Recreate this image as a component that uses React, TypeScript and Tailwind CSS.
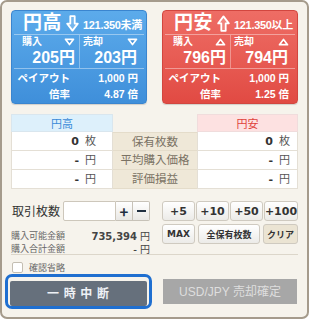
import type { ReactNode } from 'react';

const CARD_FONT = "font-['Liberation_Sans','Noto_Sans_CJK_JP',sans-serif]";

/* outlined arrow in the card title */
function BigArrow({ dir }: { dir: 'up' | 'down' }) {
  return (
    <svg width="13" height="17" viewBox="0 0 13 17" className={dir === 'up' ? 'rotate-180' : ''}>
      <path d="M4.3 1.2h4.4v7.4h3.1L6.5 15.6 1.2 8.6h3.1z" fill="rgba(255,255,255,0.18)" stroke="#fff" strokeWidth="1.8" strokeLinejoin="round" />
    </svg>
  );
}

function Tri({ dir, fill }: { dir: 'up' | 'down'; fill: string }) {
  return (
    <svg width="11" height="8" viewBox="0 0 11 8" className={dir === 'up' ? 'rotate-180' : ''}>
      <path d="M1.5 1.3h8L5.5 6.6z" fill={fill} stroke="#fff" strokeWidth="1.7" strokeLinejoin="round" />
    </svg>
  );
}

type CardProps = {
  title: string;
  dir: 'up' | 'down';
  limit: string;
  buy: string;
  sell: string;
  rate: string;
  tone: 'blue' | 'red';
};

function RateCard({ title, dir, limit, buy, sell, rate, tone }: CardProps) {
  const blue = tone === 'blue';
  return (
    <div
      className={`${CARD_FONT} w-[136px] h-[94px] rounded-[4px] border flex flex-col text-white font-bold shadow-[0_1px_1px_rgba(0,0,0,0.15)] ${
        blue
          ? 'border-[#3a85cf] bg-gradient-to-b from-[#5cabeb] to-[#3f8fda]'
          : 'border-[#d2463f] bg-gradient-to-b from-[#ee6d65] to-[#e14a43]'
      }`}
    >
      <div className="h-[23px] flex items-center pl-[11px] pr-[4px]">
        <span className="text-[19px] leading-none tracking-[0.5px]">{title}</span>
        <span className="ml-[4px] mt-[1px] flex"><BigArrow dir={dir} /></span>
        <span className="ml-auto mt-[5px] text-[11px] leading-none tracking-[-0.3px]">{limit}</span>
      </div>
      <div className="mx-[2px] h-px bg-white/40" />
      <div className="h-[33px] flex">
        <div className="w-[68px] border-r border-white/35 pl-[10px] pr-[4px] flex flex-col">
          <div className="h-[13px] pt-[1px] flex items-center justify-between">
            <span className="text-[10px] leading-none">購入</span>
            <Tri dir={dir} fill={blue ? '#3f8fda' : '#e14a43'} />
          </div>
          <div className="mt-[2px] text-right text-[16px] leading-[16px]">{buy}</div>
        </div>
        <div className="flex-1 pl-[3px] pr-[8px] flex flex-col">
          <div className="h-[13px] pt-[1px] flex items-center justify-between">
            <span className="text-[10px] leading-none">売却</span>
            <Tri dir={dir} fill={blue ? '#3f8fda' : '#e14a43'} />
          </div>
          <div className="mt-[2px] text-right text-[16px] leading-[16px] pr-[1px]">{sell}</div>
        </div>
      </div>
      <div className="mx-[2px] h-px bg-white/40" />
      <div className="pt-[1px] grid grid-cols-[58px_1fr] text-[10.5px] leading-none">
        <div className="h-[16px] flex items-center justify-end">ペイアウト</div>
        <div className="h-[16px] flex items-center justify-end pr-[8px]">1,000 円</div>
        <div className="h-[16px] flex items-center justify-end">倍率</div>
        <div className="h-[16px] flex items-center justify-end pr-[8px]">{rate} 倍</div>
      </div>
    </div>
  );
}

const ROWS = [
  { value: '0', unit: '枚', label: '保有枚数' },
  { value: '-', unit: '円', label: '平均購入価格' },
  { value: '-', unit: '円', label: '評価損益' },
];

function Val({ value, unit }: { value: string; unit: string }) {
  return (
    <span className="flex items-baseline gap-[6px]">
      <span className="font-bold text-[#333] font-['DejaVu_Sans',sans-serif] text-[11px]">{value}</span>
      <span className="text-[#555] text-[11px]">{unit}</span>
    </span>
  );
}

function QBtn({ children, w, beige }: { children: ReactNode; w: string; beige?: boolean }) {
  return (
    <button
      type="button"
      className={`${w} h-[20px] rounded-[3px] border border-[#cfcac0] font-bold text-[#333] flex items-center justify-center leading-none ${
        beige ? 'bg-[#ebe4d3]' : 'bg-gradient-to-b from-white to-[#ecebe8]'
      }`}
    >
      {children}
    </button>
  );
}

export default function App() {
  return (
    <div className="w-[309px] h-[319px] bg-white overflow-hidden">
      <div className="w-full h-full rounded-[7px] border-2 border-[#a59b8c] bg-[#f6f3ec] px-[9px] pt-[8px] flex flex-col font-['Noto_Sans_CJK_JP',sans-serif]">
        {/* rate cards */}
        <div className="flex gap-[15px]">
          <RateCard title="円高" dir="down" limit="121.350未満" buy="205円" sell="203円" rate="4.87" tone="blue" />
          <RateCard title="円安" dir="up" limit="121.350以上" buy="796円" sell="794円" rate="1.25" tone="red" />
        </div>

        {/* position table */}
        <div className="mt-[10px] grid grid-cols-[102px_84px_101px] text-[11px] leading-none">
          <div className="h-[18px] flex items-center justify-center bg-[#ddf0fb] border border-[#d9e6ee] text-[#3a8ad8]">円高</div>
          <div className="h-[18px]" />
          <div className="h-[18px] flex items-center justify-center bg-[#fde1e1] border border-[#f0dcdc] text-[#e0413a]">円安</div>
          {ROWS.map((r, i) => (
            <div key={r.label} className="contents">
              <div className="h-[19px] bg-white border-x border-b border-[#e4dfd5] flex items-center justify-end pr-[16px]">
                <Val value={r.value} unit={r.unit} />
              </div>
              <div className={`h-[19px] bg-[#efe8d8] border-b border-[#e4dcca] flex items-center justify-center text-[11.5px] text-[#7a7264] ${i === 0 ? 'border-t' : ''}`}>
                {r.label}
              </div>
              <div className="h-[19px] bg-white border-x border-b border-[#e4dfd5] flex items-center justify-end pr-[7px]">
                <Val value={r.value} unit={r.unit} />
              </div>
            </div>
          ))}
        </div>

        {/* quantity */}
        <div className="mt-[12px] h-[54px] flex gap-[12px] border-b border-[#dcd6ca]">
          <div className="w-[139px] flex flex-col">
            <div className="h-[20px] flex items-center">
              <span className="w-[52px] pl-[1px] text-[12px] text-[#333]">取引枚数</span>
              <div className="w-[53px] h-[20px] bg-white border border-[#cdc7bb] rounded-l-[2px]" />
              <button type="button" className="w-[17px] h-[20px] border border-l-0 border-[#c7c2b8] bg-gradient-to-b from-white to-[#e9e8e5] text-[15px] font-bold text-[#1f2f40] leading-none flex items-center justify-center">+</button>
              <button type="button" className="w-[17px] h-[20px] border border-l-0 border-[#c7c2b8] rounded-r-[2px] bg-gradient-to-b from-white to-[#e9e8e5] flex items-center justify-center">
                <span className="w-[9px] h-[2px] bg-[#1f2f40]" />
              </button>
            </div>
            <div className="mt-[8px] h-[13px] flex items-center justify-between text-[9px] text-[#666]">
              <span>購入可能金額</span>
              <span className="flex items-baseline gap-[3px]">
                <span className="font-bold text-[10px] text-[#444] font-['DejaVu_Sans',sans-serif]">735,394</span>
                <span className="text-[10px] text-[#444]">円</span>
              </span>
            </div>
            <div className="h-[13px] flex items-center justify-between text-[9px] text-[#666]">
              <span>購入合計金額</span>
              <span className="flex items-baseline gap-[3px] text-[10px] text-[#444]">
                <span className="font-bold">-</span>
                <span>円</span>
              </span>
            </div>
          </div>
          <div className="w-[136px] flex flex-col gap-[3px]">
            <div className="flex gap-[1px] font-['DejaVu_Sans',sans-serif] text-[11px]">
              <QBtn w="w-[33px]">+5</QBtn>
              <QBtn w="w-[33px]">+10</QBtn>
              <QBtn w="w-[33px]">+50</QBtn>
              <QBtn w="w-[34px]">+100</QBtn>
            </div>
            <div className="flex gap-[3px] text-[9px]">
              <QBtn w="w-[33px]"><span className="font-['DejaVu_Sans',sans-serif]">MAX</span></QBtn>
              <QBtn w="w-[62px]">全保有枚数</QBtn>
              <QBtn w="w-[35px]" beige>クリア</QBtn>
            </div>
          </div>
        </div>

        {/* confirm */}
        <div className="mt-[7px] h-[11px] flex items-center gap-[6px] pl-[1px]">
          <span className="w-[11px] h-[11px] rounded-[2px] border border-[#c4beb2] bg-white" />
          <span className="text-[9px] text-[#666] leading-none">確認省略</span>
        </div>

        {/* actions */}
        <div className="mt-[1px] flex items-center">
          <div className="-ml-[6px] w-[147px] h-[35px] rounded-[7px] border-[3px] border-[#1f6fd0] p-[2px]">
            <button type="button" className="w-full h-full rounded-[2px] bg-[#66707c] text-[12px] font-bold text-[#eef1f5] tracking-[1px]">
              一 時 中 断
            </button>
          </div>
          <button type="button" className="ml-[11px] w-[134px] h-[25px] bg-[#a7a7a7] text-[12px] text-[#dedede] font-['Liberation_Sans','Noto_Sans_CJK_JP',sans-serif]">
            USD/JPY 売却確定
          </button>
        </div>
      </div>
    </div>
  );
}
